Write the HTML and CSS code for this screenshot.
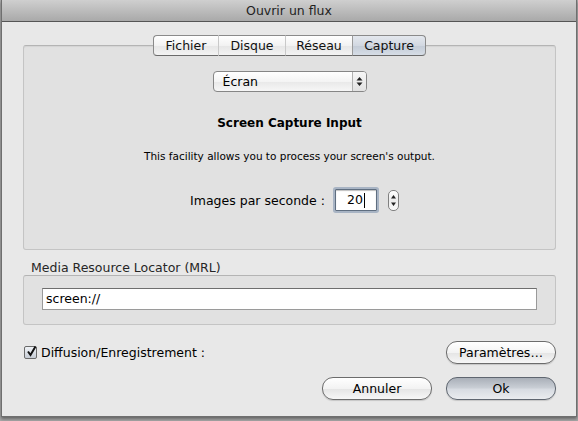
FILE: index.html
```html
<!DOCTYPE html>
<html>
<head>
<meta charset="utf-8">
<link rel="stylesheet" href="styles.css">
</head>
<body>
<div class="window">
  <div class="titlebar">Ouvrir un flux</div>
  <div class="content">
    <div class="tabs">
      <div class="tab t1">Fichier</div>
      <div class="tab t2">Disque</div>
      <div class="tab t3">Réseau</div>
      <div class="tab t4 selected">Capture</div>
    </div>
    <div class="panel">
      <div class="popup">
        <span class="popup-label">Écran</span>
        <span class="popup-arrows">
          <svg width="7" height="11" viewBox="0 0 7 11"><path d="M3.5 1 L6.5 4.5 L0.5 4.5 Z M3.5 10 L6.5 6.5 L0.5 6.5 Z" fill="#222"/></svg>
        </span>
      </div>
      <div class="heading">Screen Capture Input</div>
      <div class="desc">This facility allows you to process your screen's output.</div>
      <div class="fps-row">
        <span class="fps-label">Images par seconde :</span>
        <span class="fps-input"><span class="fps-value">20</span><span class="caret"></span></span>
        <span class="stepper">
          <svg width="9" height="19" viewBox="0 0 9 19"><path d="M4.5 4 L7 7.5 L2 7.5 Z M4.5 15 L7 11.5 L2 11.5 Z" fill="#222"/></svg>
        </span>
      </div>
    </div>
    <div class="mrl-label">Media Resource Locator (MRL)</div>
    <div class="mrl-box">
      <div class="mrl-field">screen://</div>
    </div>
    <div class="stream-row">
      <label class="check">
        <span class="checkbox">
          <svg width="13" height="13" viewBox="0 0 13 13"><path d="M3 6.5 L5.5 10 L10.5 1.5" fill="none" stroke="#111" stroke-width="2"/></svg>
        </span>
        <span>Diffusion/Enregistrement :</span>
      </label>
      <div class="btn">Paramètres…</div>
    </div>
    <div class="actions">
      <div class="btn">Annuler</div>
      <div class="btn default">Ok</div>
    </div>
  </div>
</div>
</body>
</html>
```
FILE: styles.css
```css
html, body {
  margin: 0;
  padding: 0;
}
body {
  width: 578px;
  height: 421px;
  background: #a9a9a9;
  font-family: "DejaVu Sans", "Liberation Sans", sans-serif;
  font-size: 12.5px;
  color: #000;
  overflow: hidden;
}
.window {
  margin-left: 1px;
  width: 574px;
  height: 416px;
  background: #e8e8e8;
  border-left: 1px solid #6f6f6f;
  border-right: 1px solid #6f6f6f;
  border-bottom: 1px solid #6f6f6f;
  box-shadow: 0 2px 3px rgba(0,0,0,0.4);
}
.titlebar {
  height: 22px;
  line-height: 22px;
  text-align: center;
  font-size: 12.5px;
  color: #1e1e1e;
  background: linear-gradient(#cfcfcf, #a9a9a9);
  border-bottom: 1px solid #555;
  box-sizing: border-box;
}
.content {
  padding: 13px 20px 0 21px;
}
.tabs {
  display: flex;
  justify-content: center;
  position: relative;
  z-index: 2;
}
.tab {
  height: 19px;
  line-height: 19px;
  text-align: center;
  background: linear-gradient(#ffffff, #f2f2f2 50%, #e6e6e6 51%, #f3f3f3);
  border-top: 1px solid #8a8a8a;
  border-bottom: 1px solid #6a6a6a;
  border-right: 1px solid #c9c9c9;
  color: #111;
}
.t1 { width: 64px; border-left: 1px solid #8a8a8a; border-radius: 4px 0 0 4px; }
.t2 { width: 66px; }
.t3 { width: 66px; border-right-color: #9a9a9a; }
.t4 { width: 72px; border-right: 1px solid #8a8a8a; border-radius: 0 4px 4px 0; }
.tab.selected {
  background: linear-gradient(#e4e8ee, #d2d8e1 50%, #c3cbd6 51%, #d6dde6);
}
.panel {
  margin-top: -11px;
  height: 205px;
  background: #e1e1e1;
  border: 1px solid #c4c4c4;
  border-top-color: #b4b4b4;
  border-radius: 3px;
  box-shadow: inset 0 1px 1px rgba(0,0,0,0.06);
  display: flex;
  flex-direction: column;
  align-items: center;
  padding-top: 25px;
  box-sizing: border-box;
}
.popup {
  width: 154px;
  height: 21px;
  box-sizing: border-box;
  border: 1px solid #868686;
  border-radius: 4px;
  background: linear-gradient(#ffffff, #f4f4f4 50%, #e8e8e8 51%, #f6f6f6);
  display: flex;
  align-items: stretch;
}
.popup-label {
  flex: 1;
  padding-left: 9px;
  line-height: 19px;
}
.popup-arrows {
  width: 13px;
  border-left: 1px solid #b0b0b0;
  display: flex;
  align-items: center;
  justify-content: center;
  border-radius: 0 3px 3px 0;
  background: linear-gradient(#f6f6f6, #e2e2e2);
}
.heading {
  font-size: 12px;
  font-weight: bold;
  margin-top: 23px;
  height: 16px;
  line-height: 16px;
}
.desc {
  font-size: 10.5px;
  margin-top: 18px;
  height: 14px;
  line-height: 14px;
}
.fps-row {
  display: flex;
  align-items: center;
  margin-top: 26px;
  margin-left: 10px;
}
.fps-label {
  margin-right: 10px;
}
.fps-input {
  width: 42px;
  height: 22px;
  box-sizing: border-box;
  background: #fff;
  border: 1px solid #5f6e80;
  box-shadow: 0 0 0 2px #a8b4c4, inset 0 1px 1px rgba(0,0,0,0.25);
  border-radius: 1px;
  display: flex;
  align-items: center;
  justify-content: flex-end;
  padding-right: 11px;
}
.fps-value {
  line-height: 16px;
}
.caret {
  width: 1px;
  height: 15px;
  background: #000;
  margin-left: 1px;
}
.stepper {
  margin-left: 11px;
  width: 11px;
  height: 21px;
  box-sizing: border-box;
  border: 1px solid #808080;
  border-radius: 5px;
  background: linear-gradient(#ffffff, #ececec 50%, #f8f8f8);
  display: flex;
  align-items: center;
  justify-content: center;
}
.mrl-label {
  margin-top: 11px;
  padding-left: 8px;
  color: #262626;
  height: 14px;
  line-height: 14px;
}
.mrl-box {
  height: 50px;
  box-sizing: border-box;
  background: #e1e1e1;
  border: 1px solid #c4c4c4;
  border-top-color: #b4b4b4;
  border-radius: 3px;
  padding: 12px 18px 0 18px;
}
.mrl-field {
  height: 22px;
  box-sizing: border-box;
  background: #fff;
  border: 1px solid #9a9a9a;
  border-top-color: #6e6e6e;
  padding-left: 3px;
  line-height: 20px;
}
.stream-row {
  display: flex;
  align-items: center;
  justify-content: space-between;
  margin-top: 16px;
}
.check {
  display: flex;
  align-items: center;
  gap: 4px;
  margin-left: 1px;
}
.checkbox {
  width: 13px;
  height: 13px;
  box-sizing: border-box;
  border: 1px solid #6a6a6a;
  border-radius: 2px;
  background: linear-gradient(#f0f3f7, #c6ccd5);
  display: flex;
  align-items: center;
  justify-content: center;
  position: relative;
}
.checkbox svg {
  position: absolute;
  left: 0;
  top: -2px;
}
.btn {
  width: 110px;
  height: 23px;
  box-sizing: border-box;
  border: 1px solid #6c6c6c;
  border-radius: 11px;
  background: linear-gradient(#ffffff, #f3f3f3 50%, #e4e4e4 51%, #f7f7f7);
  text-align: center;
  line-height: 21px;
  box-shadow: 0 1px 1px rgba(0,0,0,0.15);
}
.actions {
  display: flex;
  justify-content: flex-end;
  gap: 14px;
  margin-top: 13px;
}
.btn.default {
  background: linear-gradient(#a9afb8, #c8cdd4 45%, #d8dce2 55%, #eaecef);
  border-color: #5f6670;
}
```
